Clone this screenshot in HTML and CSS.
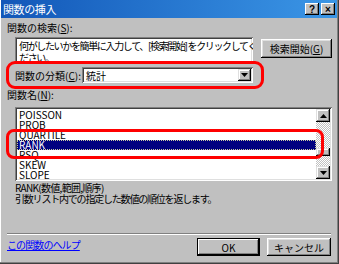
FILE: index.html
```html
<!DOCTYPE html>
<html lang="ja">
  <head>
    <meta charset="UTF-8" />
    <title>関数の挿入</title>
    <link rel="stylesheet" href="styles.css">
  </head>
  <body>
    <div class="window">
      <div class="titlebar">
        <span class="title">関数の挿入</span>
        <div class="tbtns">
          <span class="tbtn">?</span>
          <span class="tbtn">×</span>
        </div>
      </div>

      <div class="content">
        <div class="label">関数の検索(<u>S</u>):</div>
        <div class="search-row">
          <div class="textbox">何がしたいかを簡単に入力して、[検索開始] をクリックしてく<br>ださい。</div>
          <button class="btn search-btn">検索開始(<u>G</u>)</button>
        </div>

        <div class="cat-row">
          <span class="cat-label">関数の分類(<u>C</u>):</span>
          <div class="combo">
            <span class="combo-text">統計</span>
            <span class="drop">
              <svg width="7" height="4" viewBox="0 0 7 4"><path d="M0 0h7L3.5 4z" fill="#000"/></svg>
            </span>
          </div>
        </div>

        <div class="label name-label">関数名(<u>N</u>):</div>
        <div class="listbox">
          <ul class="items">
            <li>POISSON</li>
            <li>PROB</li>
            <li>QUARTILE</li>
            <li class="selected">RANK</li>
            <li>RSQ</li>
            <li>SKEW</li>
            <li>SLOPE</li>
          </ul>
          <div class="vscroll">
            <span class="sbtn">
              <svg width="7" height="4" viewBox="0 0 7 4"><path d="M0 4h7L3.5 0z" fill="#000"/></svg>
            </span>
            <div class="track"><span class="thumb"></span></div>
            <span class="sbtn">
              <svg width="7" height="4" viewBox="0 0 7 4"><path d="M0 0h7L3.5 4z" fill="#000"/></svg>
            </span>
          </div>
        </div>

        <div class="syntax">RANK(数値,範囲,順序)</div>
        <div class="desc">引数リスト内での指定した数値の順位を返します。</div>

        <div class="sep"></div>
        <div class="footer">
          <a class="help" href="#">この関数のヘルプ</a>
          <div class="btns">
            <button class="btn default">OK</button>
            <button class="btn cancel">キャンセル</button>
          </div>
        </div>
      </div>

      <!-- annotation marks -->
      <div class="mark mark-cat"></div>
      <div class="mark mark-rank"></div>
    </div>
  </body>
</html>
```

FILE: styles.css
```css
* {
  box-sizing: border-box;
}
body {
  margin: 0;
  font-family: "Noto Sans CJK JP", "Liberation Sans", sans-serif;
  font-size: 10px;
  color: #000;
}
u {
  text-decoration: underline;
}

.window {
  position: relative;
  width: 339px;
  height: 264px;
  background: #c0c0c0;
  padding: 0 2px 2px 1px;
  display: flex;
  flex-direction: column;
  box-shadow: inset -1px -1px #404040, inset -2px -2px #808080, inset 1px 0 #fff;
}

.titlebar {
  height: 18px;
  display: flex;
  align-items: center;
  justify-content: space-between;
  padding: 0 2px 0 2px;
  background: linear-gradient(to right, #1257b8, #3b96e6);
  color: #fff;
}
.title {
  font-size: 11px;
  line-height: 12px;
  letter-spacing: -0.4px;
}
.tbtns {
  display: flex;
  gap: 2px;
}
.tbtn {
  width: 14px;
  height: 12px;
  display: flex;
  align-items: center;
  justify-content: center;
  background: #c0c0c0;
  color: #000;
  font-family: "Liberation Sans", sans-serif;
  font-weight: bold;
  font-size: 10px;
  box-shadow: inset -1px -1px #000, inset 1px 1px #fff, inset -2px -2px #808080;
}

.content {
  flex: 1;
  display: flex;
  flex-direction: column;
  padding: 4px 5px 6px 6px;
}
.label {
  line-height: 12px;
}

.search-row {
  display: flex;
  align-items: flex-start;
  gap: 8px;
  margin-top: 3px;
  padding-left: 8px;
}
.textbox {
  width: 238px;
  height: 26px;
  overflow: hidden;
  background: #fff;
  padding: 3px 2px 0 4px;
  line-height: 12px;
  letter-spacing: -1.35px;
  white-space: nowrap;
  box-shadow: inset 1px 1px #808080, inset -1px -1px #fff, inset 2px 2px #404040, inset -2px -2px #dfdfdf;
}

.btn {
  font: inherit;
  color: #000;
  background: #c0c0c0;
  border: none;
  padding: 0;
  box-shadow: inset -1px -1px #000, inset 1px 1px #fff, inset -2px -2px #808080, inset 2px 2px #dfdfdf;
}
.search-btn {
  width: 71px;
  height: 19px;
  margin-top: 2px;
}

.cat-row {
  display: flex;
  align-items: center;
  margin-top: 4px;
  padding-left: 8px;
}
.cat-label {
  width: 67px;
}
.combo {
  width: 171px;
  height: 16px;
  display: flex;
  align-items: center;
  justify-content: space-between;
  background: #fff;
  padding: 2px 2px 2px 4px;
  box-shadow: inset 1px 1px #808080, inset -1px -1px #fff, inset 2px 2px #404040, inset -2px -2px #dfdfdf;
}
.drop {
  width: 13px;
  height: 12px;
  display: flex;
  align-items: center;
  justify-content: center;
  background: #c0c0c0;
  box-shadow: inset -1px -1px #000, inset 1px 1px #dfdfdf, inset -2px -2px #808080, inset 2px 2px #fff;
}

.name-label {
  margin-top: 6px;
}
.listbox {
  display: flex;
  height: 74px;
  margin: 6px 0 0 8px;
  background: #fff;
  padding: 2px;
  box-shadow: inset 1px 1px #808080, inset -1px -1px #fff, inset 2px 2px #404040, inset -2px -2px #dfdfdf;
}
.items {
  flex: 1;
  list-style: none;
  margin: 0;
  padding: 1px 0 0;
  overflow: hidden;
}
.items li {
  height: 10px;
  line-height: 10px;
  padding-left: 2px;
}
.items .selected {
  background: #000080;
  color: #fff;
  outline: 1px dotted #c8c8a0;
  outline-offset: -1px;
}
.vscroll {
  width: 14px;
  display: flex;
  flex-direction: column;
}
.sbtn {
  height: 13px;
  display: flex;
  align-items: center;
  justify-content: center;
  background: #c0c0c0;
  box-shadow: inset -1px -1px #000, inset 1px 1px #dfdfdf, inset -2px -2px #808080, inset 2px 2px #fff;
}
.track {
  flex: 1;
  background: repeating-conic-gradient(#c0c0c0 0 25%, #fff 0 50%) 0 0 / 2px 2px;
}
.thumb {
  display: block;
  height: 8px;
  margin-top: 26px;
  background: #c0c0c0;
  box-shadow: inset -1px -1px #000, inset 1px 1px #dfdfdf, inset -2px -2px #808080, inset 2px 2px #fff;
}

.syntax {
  margin-top: 1px;
  padding-left: 8px;
  line-height: 11px;
  letter-spacing: -0.7px;
}
.desc {
  padding-left: 8px;
  line-height: 11px;
  letter-spacing: -1.2px;
}

.sep {
  margin-top: auto;
  margin-right: 1px;
  border-top: 1px solid #808080;
  border-bottom: 1px solid #fff;
}
.footer {
  display: flex;
  justify-content: space-between;
  align-items: flex-start;
  margin-top: 3px;
  padding-right: 1px;
}
.help {
  color: #0000ff;
  text-decoration: underline;
  line-height: 12px;
  margin-top: 1px;
  letter-spacing: -0.9px;
}
.btns {
  display: flex;
  gap: 7px;
}
.btns .btn {
  height: 18px;
}
.default {
  width: 63px;
  outline: 1px solid #000;
  outline-offset: -1px;
  box-shadow: inset -2px -2px #000, inset 2px 2px #fff, inset -3px -3px #808080;
}
.cancel {
  width: 64px;
}

.mark {
  position: absolute;
  border: 3px solid #ff0000;
}
.mark-cat {
  left: 6px;
  top: 61px;
  width: 258px;
  height: 28px;
  border-radius: 9px;
}
.mark-rank {
  left: 6px;
  top: 129px;
  width: 318px;
  height: 30px;
  border-radius: 8px;
}
```
